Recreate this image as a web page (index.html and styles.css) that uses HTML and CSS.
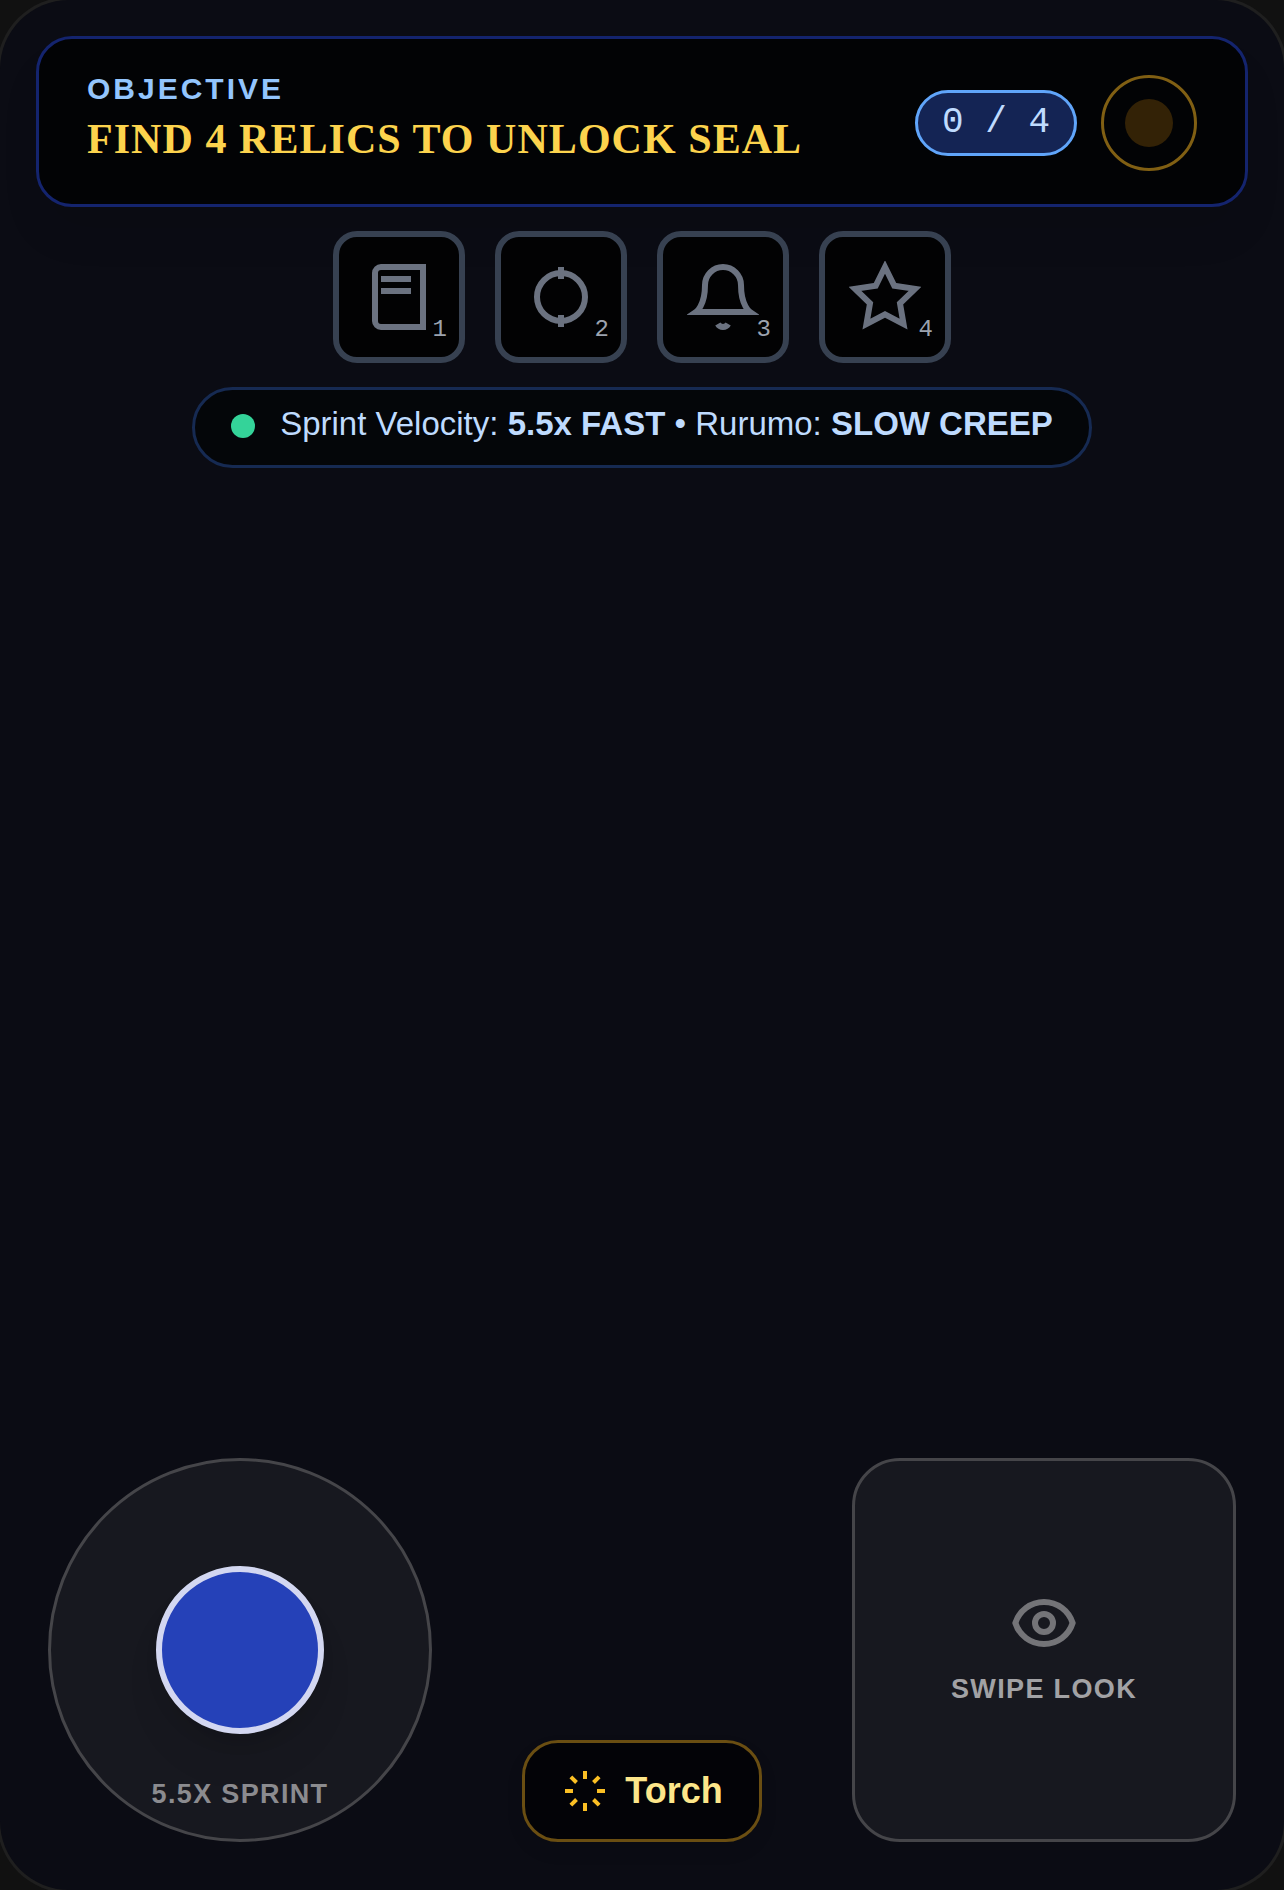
FILE: index.html
```html
<!DOCTYPE html>
<html lang="en">
<head>
<meta charset="utf-8">
<meta name="viewport" content="width=device-width, initial-scale=1">
<title>Relic Hunt</title>
<link rel="stylesheet" href="styles.css">
</head>
<body>
<main class="screen">
  <header class="objective">
    <div class="objective-text">
      <p class="objective-label">OBJECTIVE</p>
      <h1 class="objective-title">FIND 4 RELICS TO UNLOCK SEAL</h1>
    </div>
    <div class="objective-status">
      <span class="counter">0 / 4</span>
      <span class="seal"><span class="seal-core"></span></span>
    </div>
  </header>

  <ul class="relics">
    <li class="relic">
      <svg class="relic-icon" viewBox="0 0 24 24" aria-hidden="true"><path d="M4 4c0-1.1.9-2 2-2h14v20H6c-1.1 0-2-.9-2-2V4z"/><path d="M6 6h10M6 10h10"/></svg>
      <span class="relic-number">1</span>
    </li>
    <li class="relic">
      <svg class="relic-icon" viewBox="0 0 24 24" aria-hidden="true"><circle cx="12" cy="12" r="8"/><path d="M12 2v4M12 18v4"/></svg>
      <span class="relic-number">2</span>
    </li>
    <li class="relic">
      <svg class="relic-icon" viewBox="0 0 24 24" aria-hidden="true"><path d="M18 8A6 6 0 0 0 6 8c0 7-3 9-3 9h18s-3-2-3-9"/><path d="M13.73 21a2 2 0 0 1-3.46 0"/></svg>
      <span class="relic-number">3</span>
    </li>
    <li class="relic">
      <svg class="relic-icon" viewBox="0 0 24 24" aria-hidden="true"><path d="M12 2l3.09 6.26L22 9.27l-5 4.87 1.18 6.88L12 17.77l-6.18 3.25L7 14.14 2 9.27l6.91-1.01L12 2z"/></svg>
      <span class="relic-number">4</span>
    </li>
  </ul>

  <div class="pace">
    <span class="pace-dot"></span>
    <p class="pace-text">Sprint Velocity: <strong>5.5x FAST</strong> • Rurumo: <strong>SLOW CREEP</strong></p>
  </div>

  <div class="controls">
    <div class="stick">
      <span class="stick-knob"></span>
      <span class="stick-label">5.5X SPRINT</span>
    </div>
    <button class="torch" type="button">
      <svg class="torch-icon" viewBox="0 0 24 24" aria-hidden="true"><path d="M12 2v4M12 18v4M2 12h4M18 12h4M4.93 4.93l2.83 2.83M16.24 16.24l2.83 2.83M4.93 19.07l2.83-2.83M16.24 7.76l2.83-2.83"/></svg>
      Torch
    </button>
    <div class="look">
      <svg class="look-icon" viewBox="0 0 24 24" aria-hidden="true"><path d="M15 12a3 3 0 1 1-6 0 3 3 0 0 1 6 0z"/><path d="M2.458 12C3.732 7.943 7.523 5 12 5c4.478 0 8.268 2.943 9.542 7-1.274 4.057-5.064 7-9.542 7-4.477 0-8.268-2.943-9.542-7z"/></svg>
      <span class="look-label">SWIPE LOOK</span>
    </div>
  </div>
</main>
</body>
</html>
```
FILE: styles.css
```css
* {
  box-sizing: border-box;
}

body {
  margin: 0;
  background: #111111;
  font-family: "Liberation Sans", Arial, sans-serif;
}

p,
h1,
ul {
  margin: 0;
  padding: 0;
}

svg {
  display: block;
  flex: none;
  fill: none;
  stroke: currentColor;
  stroke-width: 2;
}

.screen {
  display: flex;
  flex-direction: column;
  align-items: center;
  gap: 24px;
  min-height: 100vh;
  padding: 36px 36px 48px;
  border-radius: 69px;
  background: #0b0c14;
  box-shadow: 0 0 0 3px #1f1f1f;
}

/* Objective bar */
.objective {
  display: flex;
  align-items: center;
  justify-content: space-between;
  gap: 24px;
  width: 100%;
  min-height: 171px;
  padding: 30px 48px 27px;
  border: 3px solid #14246e;
  border-radius: 36px;
  background: #020305;
  box-shadow: 0 30px 45px -9px rgba(0, 0, 0, 0.1);
}

.objective-text {
  align-self: flex-start;
}

.objective-label {
  color: #93c5fd;
  font-size: 30px;
  font-weight: 700;
  line-height: 40px;
  letter-spacing: 0.1em;
}

.objective-title {
  color: #fcd34d;
  font-family: "Liberation Serif", "Times New Roman", serif;
  font-size: 42px;
  font-weight: 700;
  line-height: 60px;
  letter-spacing: 0.025em;
}

.objective-status {
  display: flex;
  align-items: center;
  gap: 24px;
}

.counter {
  padding: 0 24px;
  border: 3px solid #60a5fa;
  border-radius: 33px;
  background: #142454;
  color: #bfdbfe;
  font-family: "Liberation Mono", "Courier New", monospace;
  font-size: 36px;
  line-height: 60px;
  white-space: nowrap;
}

.seal {
  display: grid;
  place-items: center;
  width: 96px;
  height: 96px;
  border: 3px solid #805f13;
  border-radius: 50%;
}

.seal-core {
  width: 48px;
  height: 48px;
  border-radius: 50%;
  background: #332206;
}

/* Relic slots */
.relics {
  display: flex;
  gap: 30px;
  list-style: none;
}

.relic {
  position: relative;
  display: grid;
  place-items: center;
  width: 132px;
  height: 132px;
  border: 6px solid #374151;
  border-radius: 24px;
  background: #020203;
}

.relic-icon {
  width: 72px;
  height: 72px;
  color: #6b7280;
}

.relic-number {
  position: absolute;
  right: 12px;
  bottom: 12px;
  color: #9ca3af;
  font-family: "Liberation Mono", "Courier New", monospace;
  font-size: 24px;
  line-height: 30px;
}

/* Pace pill */
.pace {
  display: flex;
  align-items: center;
  gap: 25px;
  padding: 12px 36px 15px;
  border: 3px solid #162a52;
  border-radius: 41px;
  background: #040609;
}

.pace-dot {
  flex: none;
  width: 24px;
  height: 24px;
  border-radius: 50%;
  background: #34d399;
}

.pace-text {
  padding-bottom: 5px;
  color: #bfdbfe;
  font-size: 33px;
  line-height: 43px;
}

/* Touch controls */
.controls {
  display: flex;
  align-items: flex-end;
  justify-content: space-between;
  width: 100%;
  margin-top: auto;
  padding: 0 12px;
}

.stick,
.look {
  width: 384px;
  height: 384px;
  border: 3px solid #454549;
  background: #17181f;
  font-size: 27px;
  font-weight: 700;
  line-height: 36px;
  letter-spacing: 0.05em;
}

.stick {
  display: grid;
  grid-template-rows: 1fr auto 1fr;
  justify-items: center;
  border-radius: 50%;
}

.stick-knob {
  grid-row: 2;
  width: 168px;
  height: 168px;
  border: 6px solid #d3d7f1;
  border-radius: 50%;
  background: #2541b8;
  box-shadow: 0 30px 45px -9px rgba(0, 0, 0, 0.08), 0 12px 18px -6px rgba(0, 0, 0, 0.1);
}

.stick-label {
  grid-row: 3;
  align-self: end;
  padding-bottom: 27px;
  color: #8b8b8f;
}

.torch {
  display: flex;
  align-items: center;
  gap: 16px;
  height: 102px;
  padding: 0 36px;
  border: 3px solid #6a4e12;
  border-radius: 36px;
  background: #030307;
  box-shadow: 0 9px 18px rgba(0, 0, 0, 0.08);
  color: #fde68a;
  font: 700 36px/48px "Liberation Sans", Arial, sans-serif;
}

.torch-icon {
  width: 48px;
  height: 48px;
  color: #fbbf24;
}

.look {
  display: flex;
  flex-direction: column;
  align-items: center;
  justify-content: center;
  gap: 12px;
  padding-bottom: 6px;
  border-radius: 48px;
}

.look-icon {
  width: 72px;
  height: 72px;
  color: #747478;
}

.look-label {
  color: #a2a2a5;
}
```
